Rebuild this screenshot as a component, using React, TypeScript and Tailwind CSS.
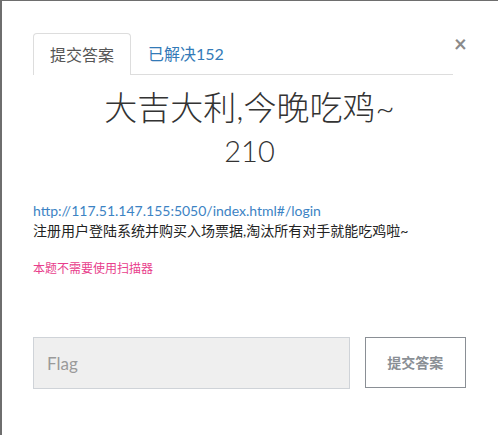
const font = { fontFamily: 'Lato, "Noto Sans CJK SC", sans-serif' };

export default function App() {
  return (
    <div
      className="w-[498px] h-[435px] bg-white border-t border-l-2 border-[#6e6e6e] overflow-hidden"
      style={font}
    >
      <div className="pt-[32px] pl-[31px] pr-[32px]">
        <div className="flex items-start">
          <div className="flex flex-1 border-b border-[#dddddd] h-[42px]">
            <div className="h-[42px] px-[16px] border border-b-0 border-[#dddddd] rounded-t-[4px] bg-white flex items-center text-[16px] text-[#555555] -mb-px">
              提交答案
            </div>
            <div className="h-[41px] px-[17px] flex items-center text-[16px] text-[#337ab7]">
              已解决152
            </div>
          </div>
          <button className="ml-[1px] mt-[3px] w-[12px] text-[#8a8a8a] text-[22px] leading-[16px] font-bold">
            ×
          </button>
        </div>

        <h3 className="text-center text-[33px] leading-[38px] text-[#333333] mt-[13px] font-light">
          大吉大利,今晚吃鸡~
        </h3>
        <div className="text-center text-[29px] leading-[38px] text-[#333333] mt-[6px] font-light">
          210
        </div>

        <div className="mt-[31px] text-[14px] leading-[20px]">
          <a className="text-[#3c83c4] block">http://117.51.147.155:5050/index.html#/login</a>
          <p className="text-[#222222]">注册用户登陆系统并购买入场票据,淘汰所有对手就能吃鸡啦~</p>
          <p className="mt-[18px] text-[12px] text-[#e83e8c]">本题不需要使用扫描器</p>
        </div>

        <div className="mt-[58px] flex items-start gap-[15px]">
          <input
            placeholder="Flag"
            className="w-[318px] h-[52px] bg-[#efefef] border border-[#cfd3d8] px-[13px] text-[17px] placeholder:text-[#9a9a9a] outline-none"
            style={font}
          />
          <button className="w-[102px] h-[51px] border border-[#8a8f95] text-[#8a8f95] text-[14px] font-semibold">
            提交答案
          </button>
        </div>
      </div>
    </div>
  );
}
